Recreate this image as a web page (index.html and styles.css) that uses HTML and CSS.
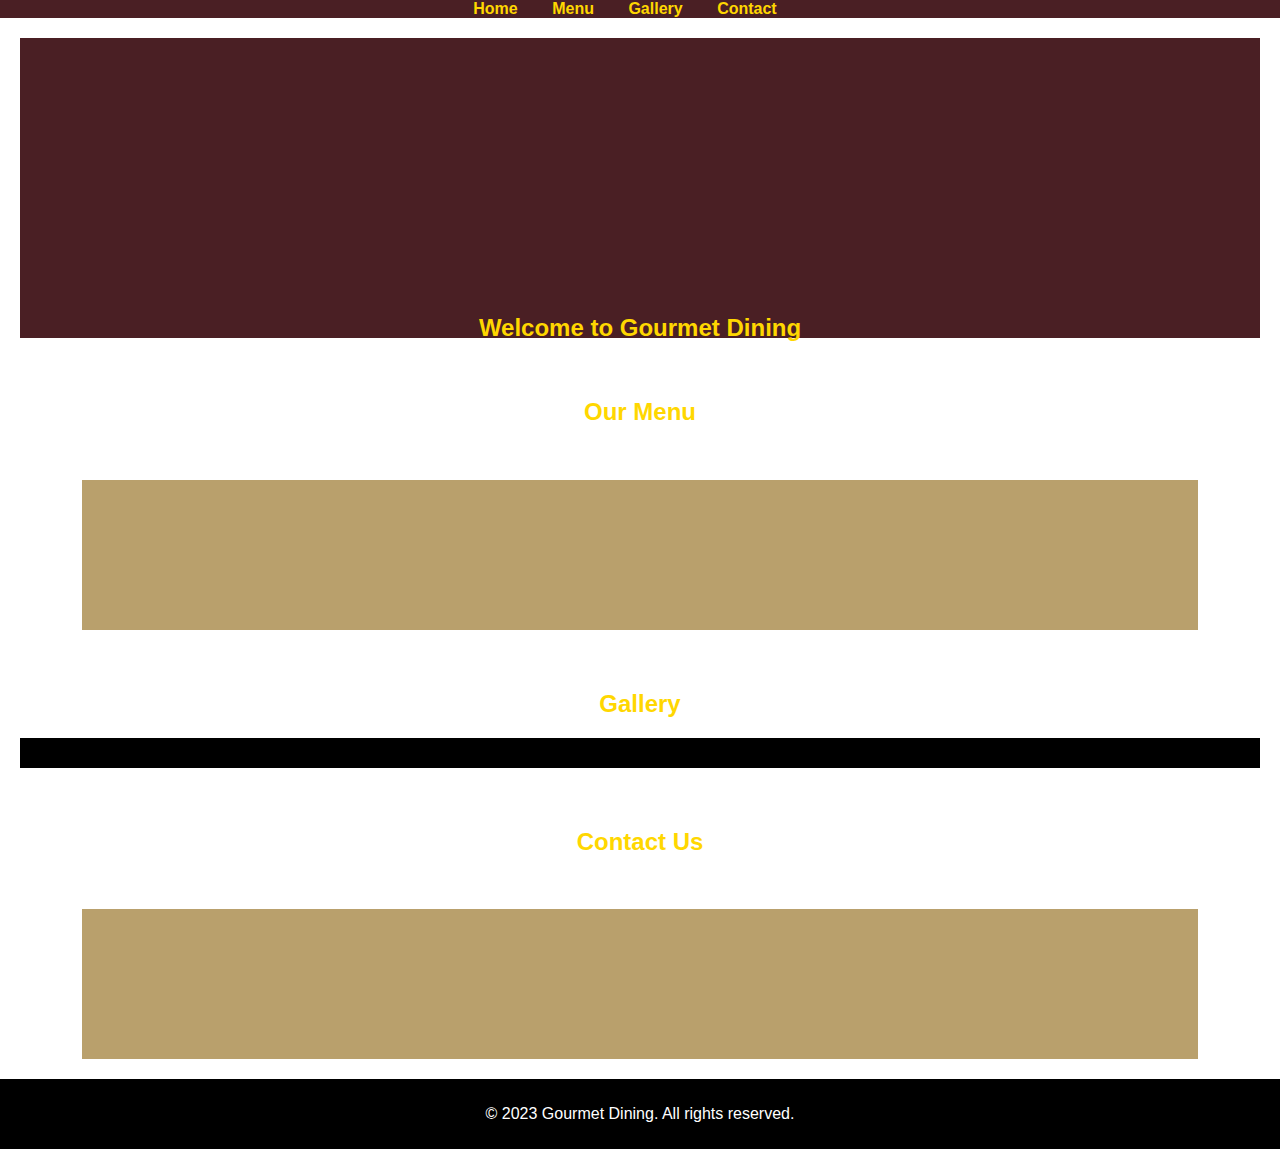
FILE: index.html
```html
<!DOCTYPE html>
<html lang="en">
<head>
<meta charset="utf-8">
<title>Gourmet Dining</title>
<link rel="stylesheet" href="styles.css">
</head>
<body>
<header class="site-header">
  <nav>
    <ul class="nav-list">
      <li><a href="#home">Home</a></li>
      <li><a href="#menu">Menu</a></li>
      <li><a href="#gallery">Gallery</a></li>
      <li><a href="#contact">Contact</a></li>
    </ul>
  </nav>
</header>
<main>
  <section class="hero" id="home">
    <h2 class="hero-title">Welcome to Gourmet Dining</h2>
  </section>
  <section class="section" id="menu">
    <h2 class="section-title">Our Menu</h2>
    <div class="panel"></div>
  </section>
  <section class="section" id="gallery">
    <h2 class="section-title">Gallery</h2>
    <div class="gallery-grid"></div>
  </section>
  <section class="section" id="contact">
    <h2 class="section-title">Contact Us</h2>
    <div class="panel"></div>
  </section>
</main>
<footer class="site-footer">
  <p>&copy; 2023 Gourmet Dining. All rights reserved.</p>
</footer>
</body>
</html>
```

FILE: styles.css
```css
body {
  margin: 0;
  font-family: "Liberation Sans", Arial, sans-serif;
  background: #ffffff;
}

.site-header {
  background: #4a1f24;
  height: 18px;
}

.nav-list {
  list-style: none;
  margin: 0;
  padding: 0;
  text-align: center;
  line-height: 18px;
}

.nav-list li {
  display: inline-block;
  margin-right: 30px;
}

.nav-list a {
  color: #ffd700;
  font-weight: bold;
  font-size: 16px;
  text-decoration: none;
}

.hero {
  margin: 20px 20px 0;
  height: 300px;
  background: #4a1f24;
  display: flex;
  justify-content: center;
  align-items: flex-end;
}

.hero-title {
  margin: 0 0 -4px;
  color: #ffd700;
  font-size: 24px;
  line-height: 27.6px;
}

.section {
  padding: 60px 20px 0;
}

.section-title {
  margin: 0 0 20px;
  color: #ffd700;
  font-size: 24px;
  line-height: 27.6px;
  text-align: center;
}

.panel {
  width: 90%;
  height: 150px;
  margin: 54px auto 0;
  background: #b9a06c;
}

.gallery-grid {
  height: 30px;
  margin-top: 20.4px;
  background: #000000;
}

.site-footer {
  margin-top: 20px;
  background: #000000;
  color: #ffffff;
  text-align: center;
  padding: 25px 0;
}

.site-footer p {
  margin: 0;
  font-size: 16px;
  line-height: 20px;
}
```
